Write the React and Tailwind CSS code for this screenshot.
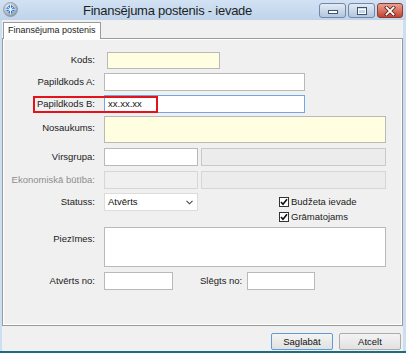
import React from "react";

const AppIcon = () => (
  <svg width="15" height="15" viewBox="0 0 15 15">
    <defs>
      <radialGradient id="orb" cx="40%" cy="35%" r="70%">
        <stop offset="0" stopColor="#f3f5f7" />
        <stop offset="1" stopColor="#8a96a3" />
      </radialGradient>
    </defs>
    <circle cx="7.5" cy="7.5" r="7" fill="url(#orb)" stroke="#7b8793" strokeWidth="0.6" />
    <path d="M7.5 2.2 L12.6 7.3 L7.5 12.4 L2.4 7.3 Z" fill="#2a7ad4" />
    <path d="M5 4.8 L10 9.8 M10 4.8 L5 9.8 M7.5 2.2 L7.5 12.4 M2.4 7.3 L12.6 7.3" stroke="#ffffff" strokeWidth="0.9" />
  </svg>
);

const CaptionButton = ({ kind }) => {
  const red = kind === "close";
  return (
    <div
      className={
        red
          ? "w-[26px] h-[15px] rounded-[3px] border border-[#8d3a32] bg-linear-to-b from-[#e9a294] to-[#c4412e] flex items-center justify-center"
          : "w-[27px] h-[15px] rounded-[3px] border border-[#7189a8] bg-linear-to-b from-[#e3ebf5] to-[#b3c6dd] flex items-center justify-center"
      }
    >
      {kind === "min" && (
        <svg width="12" height="8" viewBox="0 0 12 8">
          <rect x="1.5" y="3.5" width="9" height="3" fill="#ffffff" stroke="#3f526e" strokeWidth="1" />
        </svg>
      )}
      {kind === "max" && (
        <svg width="12" height="10" viewBox="0 0 12 10">
          <rect x="1.5" y="1.5" width="9" height="7" fill="none" stroke="#3f526e" strokeWidth="1" />
          <rect x="2.5" y="3.5" width="7" height="4" fill="none" stroke="#ffffff" strokeWidth="1" />
        </svg>
      )}
      {kind === "close" && (
        <svg width="12" height="10" viewBox="0 0 12 10">
          <path d="M2.5 1.5 L9.5 8.5 M9.5 1.5 L2.5 8.5" stroke="#5a2019" strokeWidth="3.4" strokeLinecap="square" />
          <path d="M2.5 1.5 L9.5 8.5 M9.5 1.5 L2.5 8.5" stroke="#ffffff" strokeWidth="1.8" strokeLinecap="square" />
        </svg>
      )}
    </div>
  );
};

const Label = ({ children, muted, top }) => (
  <div
    className={`w-[92px] shrink-0 text-right whitespace-nowrap ${
      muted ? "text-[#8e8e8e]" : "text-[#1b1b1b]"
    } ${top ? "self-start pt-[5px]" : ""}`}
  >
    {children}
  </div>
);

const CheckItem = ({ children }) => (
  <div className="flex items-center h-[10px] gap-[2px]">
    <div className="w-[10px] h-[10px] border border-[#333333] bg-white flex items-center justify-center">
      <svg width="8" height="8" viewBox="0 0 8 8">
        <path d="M1 4 L3 6.3 L7 1.2" fill="none" stroke="#111111" strokeWidth="1.6" />
      </svg>
    </div>
    <span className="text-[#1b1b1b] leading-none">{children}</span>
  </div>
);

export default function App() {
  return (
    <div className="w-[406px] h-[353px] bg-[#cddef1] flex flex-col overflow-hidden font-['Liberation_Sans',Arial,sans-serif] text-[9.5px]">
      {/* Title bar */}
      <div className="h-[20px] shrink-0 flex items-start bg-linear-to-b from-[#d2e2f3] to-[#bfd3ea]">
        <div className="ml-[3px] mt-[2px]">
          <AppIcon />
        </div>
        <span className="ml-[65px] mt-[3px] text-[13px] leading-[15px] tracking-[-0.25px] text-[#1c1f24]">
          Finansējuma postenis - ievade
        </span>
        <div className="ml-auto mr-[3px] mt-[3px] flex gap-[2px]">
          <CaptionButton kind="min" />
          <CaptionButton kind="max" />
          <CaptionButton kind="close" />
        </div>
      </div>

      {/* Client area */}
      <div className="ml-[2px] mr-[3px] h-[331px] bg-[#f0f0f0] flex flex-col">
        {/* Tab strip */}
        <div className="h-[18px] shrink-0 flex items-end">
          <div className="ml-[1px] w-[98px] h-[17px] -mb-px relative z-10 border border-b-0 border-[#9a9a9a] bg-white flex items-center pl-[4px] text-[9px] text-[#1b1b1b]">
            Finansējuma postenis
          </div>
        </div>

        {/* Tab panel */}
        <div className="h-[288px] shrink-0 border border-[#9a9a9a] shadow-[inset_1px_1px_0_#ffffff,inset_-1px_-1px_0_#ffffff] pt-[13px]">
          {/* Kods */}
          <div className="flex items-center h-[17px]">
            <Label>Kods:</Label>
            <div className="ml-[12px] w-[113px] h-[17px] border border-[#b9b9b9] bg-[#fffee0]" />
          </div>

          {/* Papildkods A */}
          <div className="flex items-center h-[18px] mt-[4px]">
            <Label>Papildkods A:</Label>
            <div className="ml-[9px] w-[201px] h-[18px] border border-[#b9b9b9] bg-white" />
          </div>

          {/* Papildkods B */}
          <div className="relative flex items-center h-[18px] mt-[4px]">
            <Label>Papildkods B:</Label>
            <div className="ml-[9px] w-[201px] h-[18px] border border-[#6fa8e6] bg-white flex items-center pl-[3px] text-[#111111]">
              xx.xx.xx
            </div>
            <div className="absolute left-[30px] top-[1px] w-[125px] h-[17px] border-2 border-[#e3121b]" />
          </div>

          {/* Nosaukums */}
          <div className="flex h-[27px] mt-[3px]">
            <Label top>Nosaukums:</Label>
            <div className="ml-[9px] w-[282px] h-[27px] border border-[#b9b9b9] bg-[#fffee0]" />
          </div>

          {/* Virsgrupa */}
          <div className="flex items-center h-[18px] mt-[5px]">
            <Label>Virsgrupa:</Label>
            <div className="ml-[9px] w-[94px] h-[18px] border border-[#b9b9b9] bg-white" />
            <div className="ml-[3px] w-[185px] h-[18px] border border-[#c9c9c9] bg-[#ececec]" />
          </div>

          {/* Ekonomiskā būtība */}
          <div className="flex items-center h-[18px] mt-[5px]">
            <Label muted>Ekonomiskā būtība:</Label>
            <div className="ml-[9px] w-[94px] h-[18px] border border-[#d6d6d6] bg-[#f0f0f0]" />
            <div className="ml-[3px] w-[185px] h-[18px] border border-[#d6d6d6] bg-[#ececec]" />
          </div>

          {/* Statuss + checkboxes */}
          <div className="flex items-start mt-[4px]">
            <div className="flex items-center h-[18px]">
              <Label>Statuss:</Label>
              <div className="ml-[9px] w-[94px] h-[18px] border border-[#dcdcdc] bg-white flex items-center justify-between pl-[3px] pr-[4px] text-[#111111]">
                <span>Atvērts</span>
                <svg width="7" height="5" viewBox="0 0 7 5">
                  <path d="M0.5 0.8 L3.5 3.8 L6.5 0.8" fill="none" stroke="#444444" strokeWidth="1.1" />
                </svg>
              </div>
            </div>
            <div className="ml-[81px] mt-[4px] flex flex-col gap-[5px]">
              <CheckItem>Budžeta ievade</CheckItem>
              <CheckItem>Grāmatojams</CheckItem>
            </div>
          </div>

          {/* Piezīmes */}
          <div className="flex h-[40px] mt-[5px]">
            <Label top>Piezīmes:</Label>
            <div className="ml-[9px] w-[282px] h-[40px] border border-[#b9b9b9] bg-white" />
          </div>

          {/* Atvērts no / Slēgts no */}
          <div className="flex items-center h-[18px] mt-[5px]">
            <Label>Atvērts no:</Label>
            <div className="ml-[9px] w-[69px] h-[18px] border border-[#b9b9b9] bg-white" />
            <span className="ml-[27px] text-[#1b1b1b] whitespace-nowrap">Slēgts no:</span>
            <div className="ml-[5px] w-[68px] h-[18px] border border-[#b9b9b9] bg-white" />
          </div>
        </div>

        {/* Button bar */}
        <div className="flex-1 flex justify-end items-start pt-[7px] pr-[2px] gap-[6px]">
          <button className="w-[62px] h-[17px] border border-[#5e9bd8] rounded-[2px] bg-linear-to-b from-[#f4f4f4] to-[#e1e1e1] text-[#111111] text-[9.5px] leading-none">
            Saglabāt
          </button>
          <button className="w-[62px] h-[17px] border border-[#ababab] rounded-[2px] bg-linear-to-b from-[#f4f4f4] to-[#e1e1e1] text-[#111111] text-[9.5px] leading-none">
            Atcelt
          </button>
        </div>
      </div>

      <div className="h-[2px] bg-[#1e6d7d]" />
    </div>
  );
}
